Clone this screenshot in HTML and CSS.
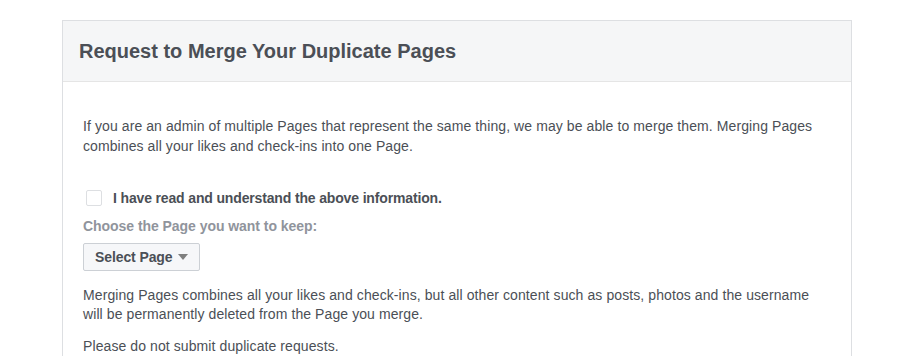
FILE: index.html
```html
<!DOCTYPE html>
<html lang="en">
<head>
    <meta charset="UTF-8">
    <title>Request to Merge Your Duplicate Pages</title>
    <link rel="stylesheet" href="styles.css">
</head>
<body>
    <div class="card">
        <div class="card-head">
            <h2>Request to Merge Your Duplicate Pages</h2>
        </div>
        <div class="card-body">
            <p class="intro">If you are an admin of multiple Pages that represent the same thing, we may be able to merge them. Merging Pages combines all your likes and check-ins into one Page.</p>
            <label class="confirm">
                <span class="check"></span>
                <span>I have read and understand the above information.</span>
            </label>
            <div class="choose">Choose the Page you want to keep:</div>
            <button class="select-btn">Select Page <i class="caret"></i></button>
            <p class="note">Merging Pages combines all your likes and check-ins, but all other content such as posts, photos and the username will be permanently deleted from the Page you merge.</p>
            <p class="note">Please do not submit duplicate requests.</p>
        </div>
    </div>
</body>
</html>
```

FILE: styles.css
```css
*{
    margin: 0;
    padding: 0;
    box-sizing: border-box;
}
body{
    background: #fff;
    font-family: "Liberation Sans", Arial, sans-serif;
    color: #4b4f56;
    padding: 20px 0 0 62px;
}
.card{
    width: 790px;
    border: 1px solid #dddfe2;
    border-bottom: none;
    background: #fff;
}
.card-head{
    height: 61px;
    background: #f5f6f7;
    border-bottom: 1px solid #e5e5e5;
    padding: 18px 16px 0;
}
.card-head h2{
    font-size: 20px;
    font-weight: bold;
    color: #4b4f56;
    line-height: 24px;
}
.card-body{
    padding: 34px 20px 0;
    font-size: 14px;
    letter-spacing: 0.09px;
}
.intro{
    line-height: 20px;
    width: 740px;
}
.confirm{
    display: flex;
    align-items: center;
    gap: 11px;
    margin: 33px 0 0 3px;
    font-weight: bold;
    line-height: 18px;
    letter-spacing: -0.15px;
}
.check{
    width: 16px;
    height: 16px;
    border: 1px solid #dddfe2;
    border-radius: 2px;
    background: #fff;
}
.choose{
    margin-top: 10px;
    font-weight: bold;
    color: #90949c;
    line-height: 18px;
    letter-spacing: -0.05px;
}
.select-btn{
    margin-top: 8px;
    height: 28px;
    padding: 0 11px;
    border: 1px solid #ccd0d5;
    border-radius: 2px;
    background: #f6f7f9;
    font-family: inherit;
    font-size: 14px;
    font-weight: bold;
    letter-spacing: -0.1px;
    color: #4b4f56;
    display: flex;
    align-items: center;
    gap: 5px;
}
.caret{
    width: 0;
    height: 0;
    border-left: 5px solid transparent;
    border-right: 5px solid transparent;
    border-top: 6px solid #7f7f7f;
}
.note{
    line-height: 19px;
    margin-top: 15px;
}
.note + .note{
    margin-top: 13px;
}
```
